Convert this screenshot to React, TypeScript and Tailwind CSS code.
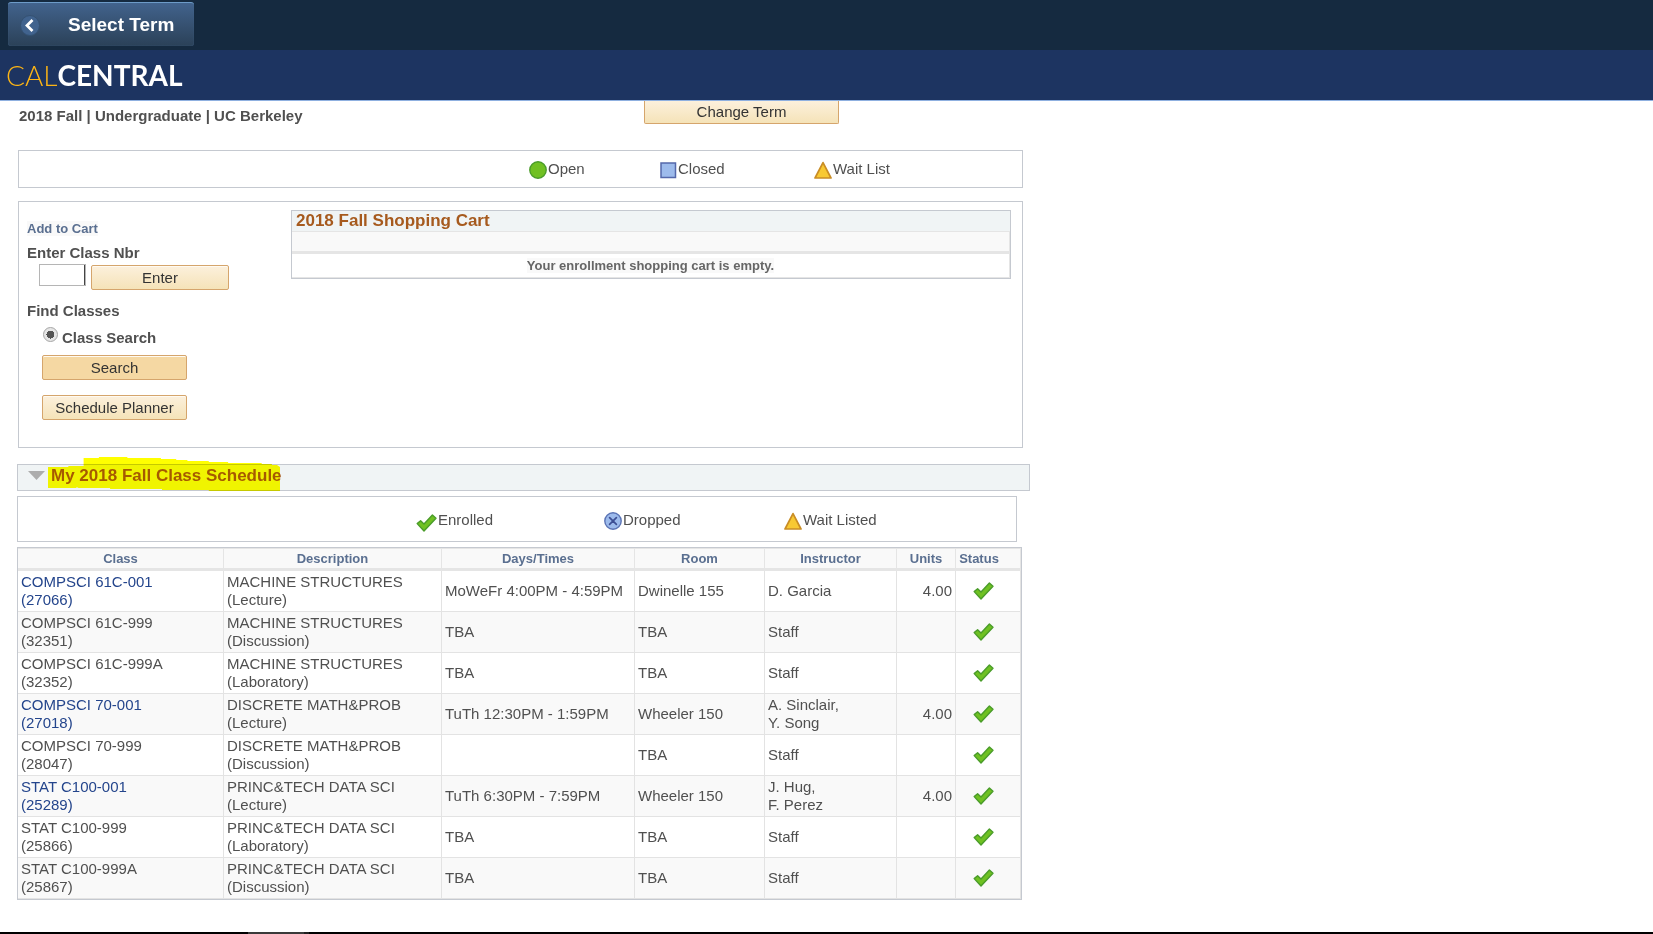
import type { ReactNode } from 'react';

type Row = {
  name: string;
  nbr: string;
  link?: boolean;
  title: string;
  kind: string;
  time: string;
  room: string;
  staff: string[];
  units?: string;
};

const rows: Row[] = [
  { name: 'COMPSCI 61C-001', nbr: '27066', link: true, title: 'MACHINE STRUCTURES', kind: 'Lecture', time: 'MoWeFr 4:00PM - 4:59PM', room: 'Dwinelle 155', staff: ['D. Garcia'], units: '4.00' },
  { name: 'COMPSCI 61C-999', nbr: '32351', title: 'MACHINE STRUCTURES', kind: 'Discussion', time: 'TBA', room: 'TBA', staff: ['Staff'] },
  { name: 'COMPSCI 61C-999A', nbr: '32352', title: 'MACHINE STRUCTURES', kind: 'Laboratory', time: 'TBA', room: 'TBA', staff: ['Staff'] },
  { name: 'COMPSCI 70-001', nbr: '27018', link: true, title: 'DISCRETE MATH&PROB', kind: 'Lecture', time: 'TuTh 12:30PM - 1:59PM', room: 'Wheeler 150', staff: ['A. Sinclair,', 'Y. Song'], units: '4.00' },
  { name: 'COMPSCI 70-999', nbr: '28047', title: 'DISCRETE MATH&PROB', kind: 'Discussion', time: '', room: 'TBA', staff: ['Staff'] },
  { name: 'STAT C100-001', nbr: '25289', link: true, title: 'PRINC&TECH DATA SCI', kind: 'Lecture', time: 'TuTh 6:30PM - 7:59PM', room: 'Wheeler 150', staff: ['J. Hug,', 'F. Perez'], units: '4.00' },
  { name: 'STAT C100-999', nbr: '25866', title: 'PRINC&TECH DATA SCI', kind: 'Laboratory', time: 'TBA', room: 'TBA', staff: ['Staff'] },
  { name: 'STAT C100-999A', nbr: '25867', title: 'PRINC&TECH DATA SCI', kind: 'Discussion', time: 'TBA', room: 'TBA', staff: ['Staff'] },
];

function Check() {
  return (
    <svg width="21" height="18" viewBox="0 0 21 18" aria-hidden="true" className="block">
      <path d="M1.2 9.6 L4.6 6.8 L8 10 L16.4 1 L20 4.2 L8 17 Z" fill="#6fc122" stroke="#4a9c2a" strokeWidth="1.4" strokeLinejoin="round" />
    </svg>
  );
}

function Triangle() {
  return (
    <svg width="18" height="18" viewBox="0 0 18 18" aria-hidden="true">
      <path d="M9 1.6 L17 17 H1 Z" fill="#f8c933" stroke="#c98d26" strokeWidth="1.7" strokeLinejoin="round" />
    </svg>
  );
}

function Circle() {
  return (
    <svg width="18" height="18" viewBox="0 0 18 18" aria-hidden="true">
      <circle cx="9" cy="9" r="8.2" fill="#70c022" stroke="#4a9c2a" strokeWidth="1.4" />
    </svg>
  );
}

function Square() {
  return (
    <svg width="17" height="18" viewBox="0 0 17 18" aria-hidden="true">
      <rect x="1" y="2" width="14.5" height="14.5" fill="#9dbbec" stroke="#5468ab" strokeWidth="1.5" />
    </svg>
  );
}

function Dropped() {
  return (
    <svg width="18" height="18" viewBox="0 0 18 18" aria-hidden="true">
      <circle cx="9" cy="9" r="8.2" fill="#9dbbec" stroke="#5b74b5" strokeWidth="1.4" />
      <path d="M5.6 5.6 L12.4 12.4 M12.4 5.6 L5.6 12.4" stroke="#3d4f94" strokeWidth="1.7" strokeLinecap="round" />
    </svg>
  );
}

function LegendItem({ icon, children }: { icon: ReactNode; children: ReactNode }) {
  return (
    <div className="flex items-center gap-px whitespace-nowrap">
      <span className="pt-[2px]">{icon}</span>
      <span>{children}</span>
    </div>
  );
}

function GoldButton({ children, className }: { children: ReactNode; className: string }) {
  return (
    <button
      type="button"
      className={`h-[25px] rounded-[2px] border border-[#d5a56c] text-center leading-[23px] text-[#333] shadow-[inset_0_1px_0_#fffaf0] ${className}`}
    >
      {children}
    </button>
  );
}

const cream = 'bg-linear-to-b from-[#fcf0dc] to-[#f5e3b8]';
const cell = 'border-r border-b border-[#e3e3e3] px-[3px] py-0';
const headCell = 'h-[23px] border-t border-r border-b-3 border-[#e5e5e5] p-0 text-center align-middle';

export default function App() {
  return (
    <div className="flex min-h-screen flex-col bg-white font-['Liberation_Sans',Arial,sans-serif] text-[15px] leading-[18px] text-[#505050]">
      <header>
        <div className="h-[50px] bg-[#152a40] pt-[2px] pl-2">
          <button
            type="button"
            className="flex h-11 w-[186px] items-center rounded-[3px] border-t border-[#6d9bc8] bg-linear-to-b from-[#42638d] to-[#2b4158] pl-3 text-[19px] leading-6 font-bold text-white shadow-[inset_0_0_1px_#4c6f97]"
          >
            <svg width="20" height="22" viewBox="0 0 20 22" aria-hidden="true">
              <ellipse cx="10" cy="11.5" rx="9.5" ry="10" fill="#41638e" stroke="#345172" />
              <path d="M12.5 6 L7 11.5 L12.5 17" fill="none" stroke="#fff" strokeWidth="2.8" />
            </svg>
            <span className="ml-7">Select Term</span>
          </button>
        </div>
        <div className="flex h-[51px] items-center border-b border-[#8fb0e0] bg-[#1d3461] pl-[6px]">
          <a href="#home" className="font-['Lato',sans-serif] text-[28px] leading-8 text-white">
            <span className="text-[#fdb515] font-light">CAL</span>
            <span className="font-bold">CENTRAL</span>
          </a>
        </div>
      </header>

      <main className="w-full max-w-[1030px]">
        <div className="flex h-[49px] items-start pl-[19px]">
          <h1 className="w-[625px] pt-[6px] font-bold">2018 Fall | Undergraduate | UC Berkeley</h1>
          <button
            type="button"
            className={`h-[23px] w-[195px] rounded-b-[2px] border border-t-0 border-[#d5a56c] leading-[22px] text-[#333] ${cream}`}
          >
            Change Term
          </button>
        </div>

        <div className="mr-[7px] ml-[18px] grid h-[38px] grid-cols-[131px_154px_auto] items-center border border-[#c5c9d0] pl-[510px]">
          <LegendItem icon={<Circle />}>Open</LegendItem>
          <LegendItem icon={<Square />}>Closed</LegendItem>
          <LegendItem icon={<Triangle />}>Wait List</LegendItem>
        </div>

        <section className="mt-[13px] mr-[7px] ml-[18px] flex h-[247px] border border-[#c5c9d0] pt-2 pr-[11px] pl-2">
          <form className="w-[264px] shrink-0 pt-[11px]">
            <h2 className="w-fit bg-[#f9f9f9] text-[13px] leading-[15px] font-bold text-[#5a6f90]">Add to Cart</h2>
            <label htmlFor="nbr" className="mt-2 block font-bold">Enter Class Nbr</label>
            <div className="mt-[2px] flex pl-3">
              <input id="nbr" type="text" className="h-[22px] w-[47px] border border-[#b5b5b5] bg-white px-1 shadow-[inset_-1px_0_0_#444]" />
              <GoldButton className={`mt-px ml-[5px] w-[138px] ${cream}`}>Enter</GoldButton>
            </div>
            <h2 className="mt-3 font-bold">Find Classes</h2>
            <div className="mt-[7px] flex items-start gap-1 pl-4">
              <input
                id="search"
                type="radio"
                name="find"
                defaultChecked
                className="size-[15px] appearance-none rounded-full border border-[#a5a5a5] bg-[radial-gradient(circle,#555_0_4px,#e6e6e6_4px)]"
              />
              <label htmlFor="search" className="pt-[2px] font-bold">Class Search</label>
            </div>
            <div className="mt-[8px] flex w-[160px] flex-col gap-[15px] pl-[15px]">
              <GoldButton className="w-[145px] bg-[#f5d8a3]">Search</GoldButton>
              <GoldButton className={`w-[145px] ${cream}`}>Schedule Planner</GoldButton>
            </div>
          </form>
          <div className="h-[69px] grow border border-[#c5c9d0]">
            <h2 className="h-5 bg-[#f0f4f5] pl-1 text-[17px] leading-5 font-bold text-[#a65a1e]">2018 Fall Shopping Cart</h2>
            <div className="h-[23px] border-t border-r border-b-3 border-[#e5e5e5] bg-[#f9f9f9]" />
            <div className="flex h-6 items-center justify-center border-r border-b border-[#e5e5e5]">
              <p className="bg-[#f9f9f9] text-[13px] leading-[15px] font-bold text-[#666]">Your enrollment shopping cart is empty.</p>
            </div>
          </div>
        </section>

        <section className="mt-4 ml-[17px]">
          <div className="flex h-[27px] items-center border border-[#c5c9d0] bg-[#f0f4f5] pl-[10px]">
            <svg width="17" height="9" viewBox="0 0 17 9" aria-hidden="true" className="mb-1">
              <path d="M0 0 H17 L8.5 9 Z" fill="#adadad" />
            </svg>
            <h2 className="relative ml-[6px] pb-[3px] text-[17px] leading-5 font-bold text-[#a65a1e]">
              My 2018 Fall Class Schedule
              <svg width="232" height="34" viewBox="0 0 228 34" preserveAspectRatio="none" aria-hidden="true" className="absolute -top-[9px] -left-[3px] mix-blend-multiply">
                <path
                  d="M0 10 H20 V9 H35 V1 H50 V0 H78 V1 H111 V2 H126 V3 H137 V4 H158 V5 H177 V6 H210 V7 H220 V8 H225 L228 10 V34 H158 V33 H112 V32 H61 V31 H30 L28 30 V31 H0 Z"
                  fill="#ffff00"
                />
              </svg>
            </h2>
          </div>

          <div className="mt-[5px] mr-[13px] grid h-[46px] grid-cols-[188px_180px_auto] items-center border border-[#c5c9d0] pt-px pl-[398px]">
            <LegendItem icon={<span className="block pt-[5px]"><Check /></span>}>Enrolled</LegendItem>
            <LegendItem icon={<Dropped />}>Dropped</LegendItem>
            <LegendItem icon={<Triangle />}>Wait Listed</LegendItem>
          </div>

          <div className="mt-[5px] mr-2 border border-[#c5c9d0]">
            <table className="w-full table-fixed border-separate border-spacing-0">
              <colgroup>
                <col className="w-[206px]" />
                <col className="w-[218px]" />
                <col className="w-[193px]" />
                <col className="w-[130px]" />
                <col className="w-[132px]" />
                <col className="w-[59px]" />
                <col />
              </colgroup>
              <thead className="bg-[#f9f9f9] text-[13px] leading-[15px] text-[#5a6f90]">
                <tr>
                  <th className={headCell}>Class</th>
                  <th className={headCell}>Description</th>
                  <th className={headCell}>Days/Times</th>
                  <th className={headCell}>Room</th>
                  <th className={headCell}>Instructor</th>
                  <th className={headCell}>Units</th>
                  <th className={`${headCell} pr-[18px]`}>Status</th>
                </tr>
              </thead>
              <tbody>
                {rows.map((r) => (
                  <tr key={r.nbr} className="h-[41px] even:bg-[#f9f9f9]">
                    <td className={cell}>
                      {r.link ? (
                        <a href={`#${r.nbr}`} className="text-[#24458c]">{r.name}<br />({r.nbr})</a>
                      ) : (
                        <>{r.name}<br />({r.nbr})</>
                      )}
                    </td>
                    <td className={cell}>{r.title}<br />({r.kind})</td>
                    <td className={cell}>{r.time}</td>
                    <td className={cell}>{r.room}</td>
                    <td className={cell}>
                      {r.staff.map((s) => (
                        <div key={s}>{s}</div>
                      ))}
                    </td>
                    <td className={`${cell} text-right`}>{r.units}</td>
                    <td className={cell}>
                      <div role="img" aria-label="Enrolled" className="pl-[14px]"><Check /></div>
                    </td>
                  </tr>
                ))}
              </tbody>
            </table>
          </div>
        </section>
      </main>

      <div className="mt-auto flex h-[2px] bg-black pl-[248px]">
        <div className="w-14 bg-[#3a3a3a]" />
        <div className="w-[5px] bg-[#1f1f1f]" />
      </div>
    </div>
  );
}
